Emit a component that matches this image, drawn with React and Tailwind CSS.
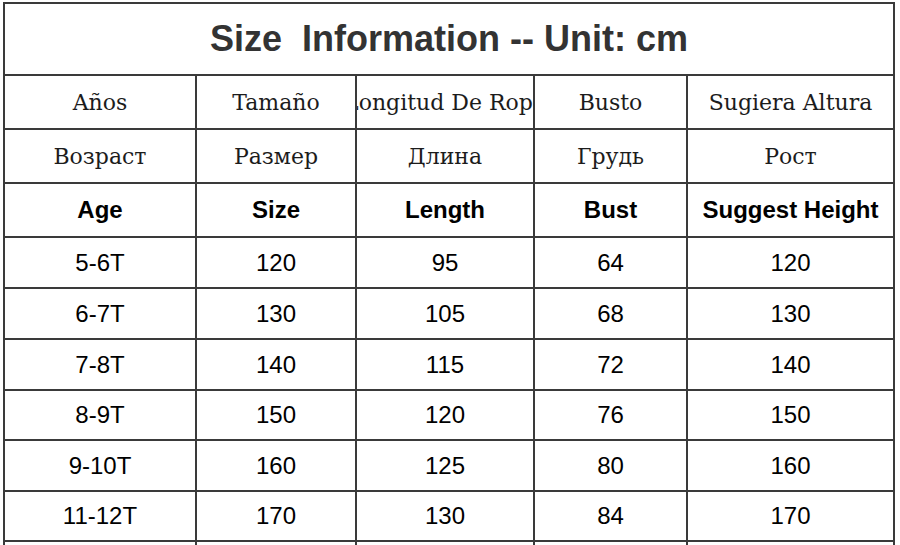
import React from 'react'

const SERIF_ROWS = [
  ['Años', 'Tamaño', 'Longitud De Ropa', 'Busto', 'Sugiera Altura'],
  ['Возраст', 'Размер', 'Длина', 'Грудь', 'Рост'],
]

const HEAD = ['Age', 'Size', 'Length', 'Bust', 'Suggest Height']

const DATA = [
  ['5-6T', '120', '95', '64', '120'],
  ['6-7T', '130', '105', '68', '130'],
  ['7-8T', '140', '115', '72', '140'],
  ['8-9T', '150', '120', '76', '150'],
  ['9-10T', '160', '125', '80', '160'],
  ['11-12T', '170', '130', '84', '170'],
  ['', '', '', '', ''],
]

function Cell({ children, className = '' }) {
  return (
    <div className={`bg-white flex items-center justify-center overflow-hidden whitespace-nowrap ${className}`}>
      {children}
    </div>
  )
}

export default function App() {
  return (
    <div className="w-[900px] h-[545px] overflow-hidden bg-white pt-[2px] pl-[3px]">
      <div className="w-[892px] grid grid-cols-[190px_158px_176px_151px_205px] grid-rows-[70px_52px_52px_52px_49px_49px_49px_48px_49px_48px_50px] gap-[2px] p-[2px] bg-[#3a3a3a]">
        <Cell className="col-span-5 text-[36px] font-bold text-[#333] pb-[1px] font-['Liberation_Sans',Arial,sans-serif]">
          Size&nbsp; Information -- Unit: cm
        </Cell>

        {SERIF_ROWS.map((row, i) =>
          row.map((t, j) => (
            <Cell key={`s${i}${j}`} className="text-[22px] text-[#1c1c1c] font-['DejaVu_Serif','Liberation_Serif',serif]">{t}</Cell>
          ))
        )}

        {HEAD.map(t => (
          <Cell key={t} className="text-[24px] font-bold text-black font-['Liberation_Sans',Arial,sans-serif]">{t}</Cell>
        ))}

        {DATA.map((row, i) =>
          row.map((t, j) => (
            <Cell key={`d${i}${j}`} className="text-[24px] text-black font-['Liberation_Sans',Arial,sans-serif]">{t}</Cell>
          ))
        )}
      </div>
    </div>
  )
}
